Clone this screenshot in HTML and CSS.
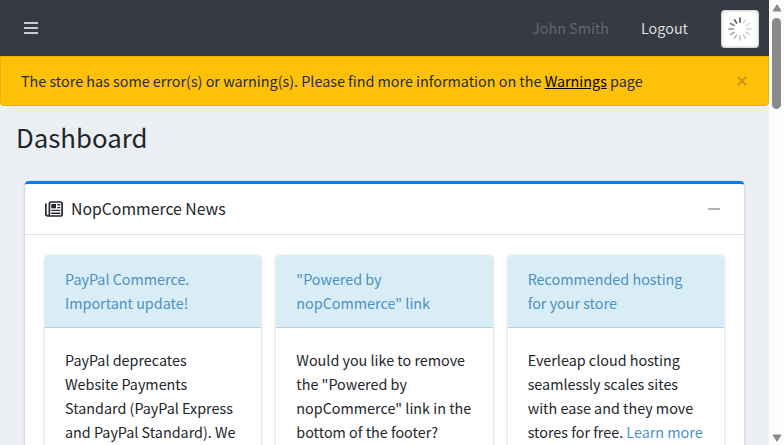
FILE: index.html
```html
<!DOCTYPE html>
<html lang="en">
<head>
<meta charset="utf-8">
<title>Dashboard</title>
<link rel="stylesheet" href="styles.css">
</head>
<body>
<div class="window">
  <div class="page">
    <nav class="topbar">
      <svg class="menu" viewBox="0 0 14 12"><path d="M0 1h14M0 6h14M0 11h14" stroke="currentColor" stroke-width="2"/></svg>
      <span class="user">John Smith</span>
      <a class="logout">Logout</a>
      <div class="loader">
        <svg viewBox="-12 -12 24 24" stroke-width="1.6" stroke="#555">
          <path d="M0-6.2V-11.5"/>
          <path d="M0-6.2V-11.5" transform="rotate(30)" opacity=".2"/>
          <path d="M0-6.2V-11.5" transform="rotate(60)" opacity=".2"/>
          <path d="M0-6.2V-11.5" transform="rotate(90)" opacity=".25"/>
          <path d="M0-6.2V-11.5" transform="rotate(120)" opacity=".25"/>
          <path d="M0-6.2V-11.5" transform="rotate(150)" opacity=".3"/>
          <path d="M0-6.2V-11.5" transform="rotate(180)" opacity=".36"/>
          <path d="M0-6.2V-11.5" transform="rotate(210)" opacity=".42"/>
          <path d="M0-6.2V-11.5" transform="rotate(240)" opacity=".55"/>
          <path d="M0-6.2V-11.5" transform="rotate(270)" opacity=".65"/>
          <path d="M0-6.2V-11.5" transform="rotate(300)" opacity=".8"/>
          <path d="M0-6.2V-11.5" transform="rotate(330)" opacity=".95"/>
        </svg>
      </div>
    </nav>
    <div class="alert">
      <span>The store has some error(s) or warning(s). Please find more information on the <a>Warnings</a> page</span>
      <svg class="close" viewBox="0 0 10 10"><path d="M1 1l8 8M9 1l-8 8" stroke="currentColor" stroke-width="2.2"/></svg>
    </div>
    <h1>Dashboard</h1>
    <section class="panel">
      <header class="panel-head">
        <svg class="news" viewBox="0 0 18 16" fill="none" stroke="currentColor">
          <path d="M4.4 13V2.9C4.4 1.7 5.1 1 6.2 1H15.4C16.5 1 17.1 1.7 17.1 2.7V13.2C17.1 14.3 16.5 15 15.4 15H2.8C1.5 15 .8 14.2.8 13V2.4M4.4 13C4.4 14.3 3.8 15 2.8 15" stroke-width="1.7"/>
          <path d="M6.3 3H11V7.3H6.3Z" fill="currentColor" stroke="none"/>
          <path d="M12.4 3.7H15.3M12.4 6.6H15.3M6.3 9.4H15.3M6.3 12.2H15.3" stroke-width="1.4"/>
        </svg>
        <h2>NopCommerce News</h2>
        <span class="collapse"></span>
      </header>
      <div class="items">
        <article class="item">
          <h3>PayPal Commerce.<br>Important update!</h3>
          <p>PayPal deprecates<br>Website Payments<br>Standard (PayPal Express<br>and PayPal Standard). We</p>
        </article>
        <article class="item">
          <h3>"Powered by<br>nopCommerce" link</h3>
          <p>Would you like to remove<br>the "Powered by<br>nopCommerce" link in the<br>bottom of the footer?</p>
        </article>
        <article class="item">
          <h3>Recommended hosting<br>for your store</h3>
          <p>Everleap cloud hosting<br>seamlessly scales sites<br>with ease and they move<br>stores for free. <a>Learn more</a></p>
        </article>
      </div>
    </section>
  </div>
  <div class="scrollbar">
    <svg class="arrow" viewBox="0 0 10 8"><path d="M5 .8L9 7H1Z"/></svg>
    <div class="thumb"></div>
    <svg class="arrow down" viewBox="0 0 10 8"><path d="M5 7.2L9 1H1Z"/></svg>
  </div>
</div>
</body>
</html>
```
FILE: styles.css
```css
* { box-sizing: border-box; }
body {
  margin: 0;
  overflow: hidden;
  font-family: "Noto Sans CJK SC", "Open Sans", sans-serif;
  font-size: 14.35px;
  line-height: 24px;
  color: #212529;
}
h1, h2, h3, p { margin: 0; font-weight: 400; }
svg { display: block; }
.window { display: grid; grid-template-columns: 1fr 15px; height: 445px; overflow: hidden; }
.page { background: #ebeef3; overflow: hidden; height: 445px; }
.topbar {
  display: flex;
  align-items: center;
  height: 56px;
  padding: 2px 10px 0 24px;
  background: #363a42;
}
.menu { width: 14px; height: 12px; margin-right: auto; margin-top: -2px; color: #c9cccc; }
.user { color: #64686d; margin: -2px 32px 0 0; }
.logout { color: #dddfdf; margin: -2px 33px 0 0; }
.loader {
  display: grid;
  place-items: center;
  width: 38px;
  height: 38px;
  border-radius: 4px;
  background: #fff;
  box-shadow: inset 0 0 3px #888;
}
.loader svg { width: 24px; height: 24px; }
.alert {
  display: flex;
  justify-content: space-between;
  align-items: center;
  height: 50px;
  padding: 0 21px 0 20px;
  border: 1px solid #edb100;
  border-radius: 0 0 4px 4px;
  background: #ffc107;
  color: #1f2d3d;
}
.alert span { padding-bottom: 1px; }
.alert a { color: #000; text-decoration: underline; }
.close { width: 10px; height: 10px; color: #c7990f; }
h1 { padding: 13px 16px 0; font-size: 25.8px; line-height: 35px; height: 75px; }
.panel {
  margin: 0 25px;
  height: 300px;
  background: #fff;
  border-top: 3px solid #007bff;
  border-radius: 4px;
  box-shadow: 0 0 1px rgba(0,0,0,.125), 0 1px 3px rgba(0,0,0,.2);
}
.panel-head {
  display: flex;
  align-items: center;
  height: 51px;
  padding: 0 24px 0 20px;
  border-bottom: 1px solid #dfdfdf;
}
.news { width: 18px; height: 16px; margin: -1px 8px 0 0; }
.panel-head h2 { font-size: 15.8px; }
.collapse { width: 12px; height: 2px; margin-left: auto; background: #adb5bd; }
.items { display: grid; grid-template-columns: repeat(3, 1fr); gap: 15px; padding: 20px; }
.item {
  height: 300px;
  border-radius: 4px;
  background: #fff;
  box-shadow: 0 0 1px rgba(0,0,0,.125), 0 1px 3px rgba(0,0,0,.2);
}
.item h3 {
  padding: 12px 20px;
  font-size: inherit;
  line-height: 24px;
  color: #4b91c2;
  background: #d9edf7;
  border-bottom: 1px solid #b5cfd9;
  border-radius: 4px 4px 0 0;
}
.item p { padding: 20px; white-space: nowrap; }
.item p a { color: #4b91c2; }
.scrollbar {
  display: flex;
  flex-direction: column;
  align-items: center;
  padding: 4px 0 3px;
  background: #fcfcfc;
}
.arrow { width: 10px; height: 8px; fill: #8b8b8b; stroke: #8b8b8b; stroke-linejoin: round; }
.thumb { width: 9px; height: 91px; margin-top: 6px; border-radius: 5px; background: #8b8b8b; }
.down { margin-top: auto; }
```
